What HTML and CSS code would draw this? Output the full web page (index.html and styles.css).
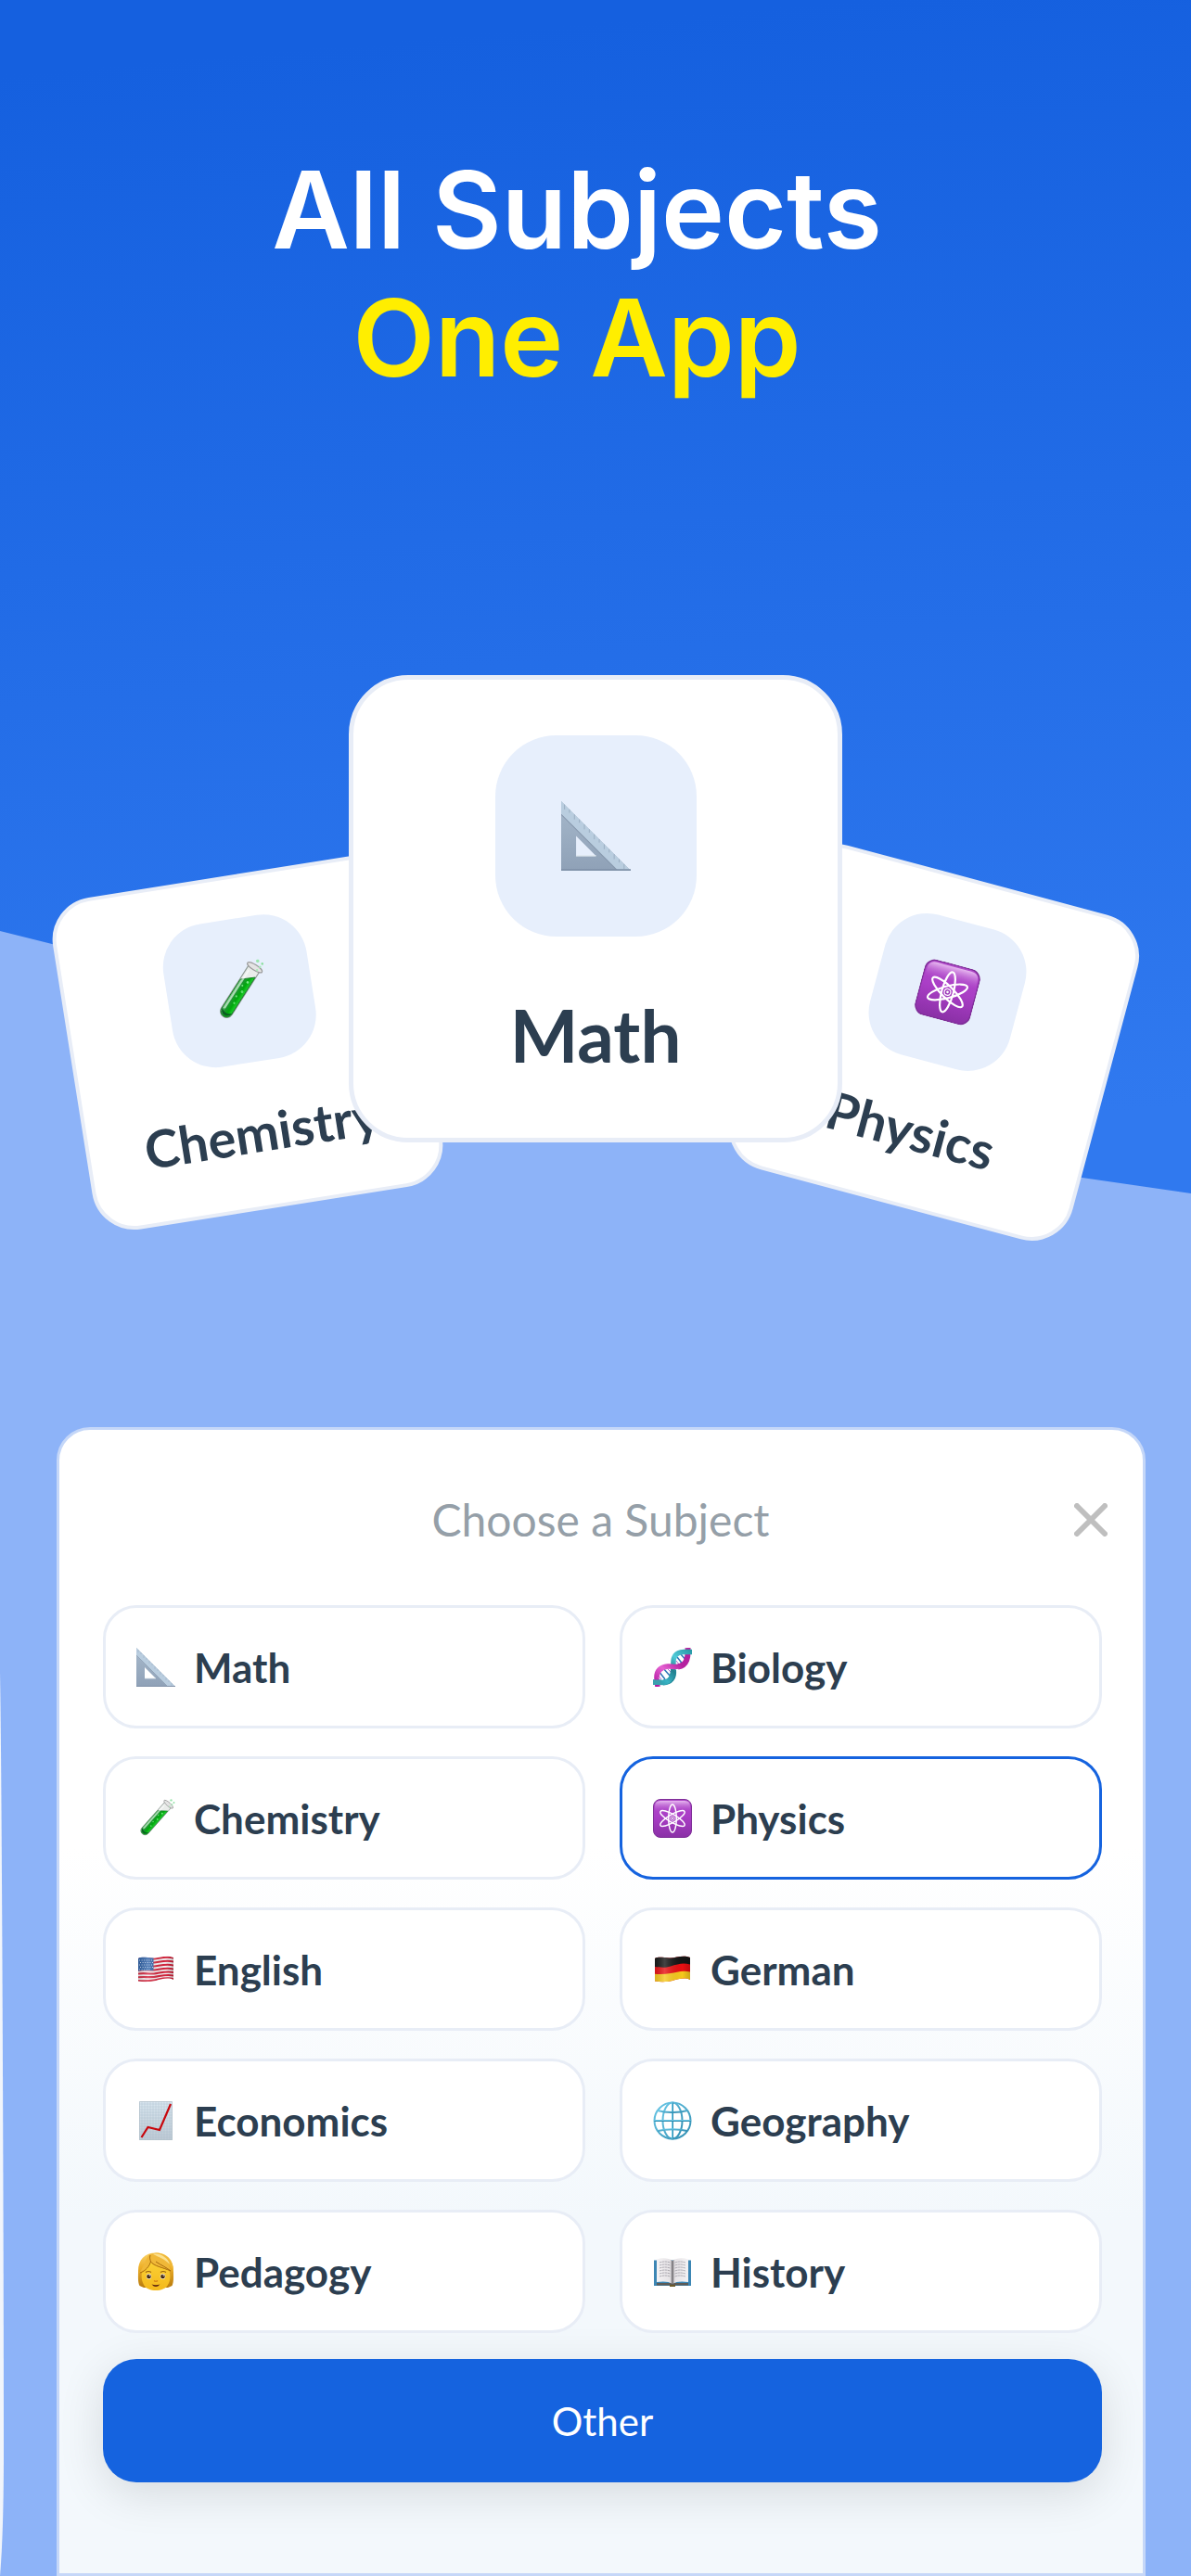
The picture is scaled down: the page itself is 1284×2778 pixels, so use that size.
FILE: index.html
```html
<!DOCTYPE html>
<html lang="en">
<head>
    <meta charset="UTF-8">
    <meta name="viewport" content="width=device-width, initial-scale=1.0">
    <title>All Subjects, One App</title>
    <link rel="stylesheet" href="styles.css">
</head>
<body>
    <!-- Icon sprite -->
    <svg class="sprite" width="0" height="0" aria-hidden="true">
        <defs>
            <linearGradient id="steel" x1="0" y1="0" x2="0" y2="1">
                <stop offset="0" stop-color="#a6b8cb"/>
                <stop offset="1" stop-color="#8fa1b7"/>
            </linearGradient>
            <linearGradient id="liquid" x1="0" y1="0" x2="1" y2="0">
                <stop offset="0" stop-color="#8fd79b"/>
                <stop offset="0.3" stop-color="#1e9632"/>
                <stop offset="0.65" stop-color="#00a80c"/>
                <stop offset="1" stop-color="#1fd02c"/>
            </linearGradient>
            <linearGradient id="purple" x1="0" y1="0" x2="0" y2="1">
                <stop offset="0" stop-color="#b04bc9"/>
                <stop offset="0.45" stop-color="#aa3ec6"/>
                <stop offset="1" stop-color="#8a30a6"/>
            </linearGradient>
            <linearGradient id="gloss" x1="0" y1="0" x2="0" y2="1">
                <stop offset="0" stop-color="#e7b8f0"/>
                <stop offset="1" stop-color="#b34fcd" stop-opacity="0"/>
            </linearGradient>
            <linearGradient id="teal" x1="1" y1="0" x2="0" y2="1">
                <stop offset="0" stop-color="#2a9aa8"/>
                <stop offset="0.3" stop-color="#4fcbd8"/>
                <stop offset="0.55" stop-color="#23808f"/>
                <stop offset="0.8" stop-color="#38b3c4"/>
                <stop offset="1" stop-color="#2a93a0"/>
            </linearGradient>
            <linearGradient id="magenta" x1="1" y1="0" x2="0" y2="1">
                <stop offset="0" stop-color="#b5219f"/>
                <stop offset="0.45" stop-color="#e561d2"/>
                <stop offset="1" stop-color="#b0129c"/>
            </linearGradient>
            <linearGradient id="paper" x1="0" y1="0" x2="0" y2="1">
                <stop offset="0" stop-color="#dbe8f1"/>
                <stop offset="1" stop-color="#bfcad4"/>
            </linearGradient>
            <linearGradient id="globe-line" x1="0" y1="0" x2="1" y2="1">
                <stop offset="0" stop-color="#6cc9e8"/>
                <stop offset="1" stop-color="#2e8cb0"/>
            </linearGradient>
            <linearGradient id="hair" x1="0" y1="0" x2="0" y2="1">
                <stop offset="0" stop-color="#f9d36b"/>
                <stop offset="0.4" stop-color="#eeb02a"/>
                <stop offset="1" stop-color="#b87a0c"/>
            </linearGradient>
            <linearGradient id="skin" x1="0" y1="0" x2="0" y2="1">
                <stop offset="0" stop-color="#fbd035"/>
                <stop offset="1" stop-color="#f4b91c"/>
            </linearGradient>
            <linearGradient id="page-shade" x1="0" y1="0" x2="1" y2="0">
                <stop offset="0" stop-color="#f4f2f4"/>
                <stop offset="0.42" stop-color="#e6e3e6"/>
                <stop offset="0.5" stop-color="#8d8b8f"/>
                <stop offset="0.58" stop-color="#e6e3e6"/>
                <stop offset="1" stop-color="#f4f2f4"/>
            </linearGradient>
            <linearGradient id="fold" x1="0" y1="0" x2="1" y2="0">
                <stop offset="0" stop-color="#000" stop-opacity="0.12"/>
                <stop offset="0.3" stop-color="#fff" stop-opacity="0.2"/>
                <stop offset="0.75" stop-color="#000" stop-opacity="0"/>
                <stop offset="1" stop-color="#000" stop-opacity="0.22"/>
            </linearGradient>
            <clipPath id="flag-shape">
                <path d="M2 9C7 6.500 13 9 19 8.500S33 5 40 8V32C34 29 27 31.500 21 33S8 34.500 2 33.500Z"/>
            </clipPath>
        </defs>

        <symbol id="icon-math" viewBox="0 0 42 42">
            <path d="M0 0L42 42H0ZM9 21V33H21Z" fill="url(#steel)" fill-rule="evenodd"/>
            <path d="M0 0L42 42H34L0 8Z" fill="#b9cddf"/>
            <path d="M0 8L34 42" stroke="#8798ad" stroke-width="0.6"/>
            <path d="M2 2V5M5 5V7M8 8V11M11 11V13M14 14V17M17 17V19M20 20V23M23 23V25M26 26V29M29 29V31M32 32V35M35 35V37M38 38V41" stroke="#8fa3b9" stroke-width="0.4"/>
            <path d="M0 41.500H42" stroke="#7f91a8"/>
            <path d="M9 33H21" stroke="#dfe7ee" stroke-width="0.8"/>
        </symbol>

        <symbol id="icon-chemistry" viewBox="0 0 42 42">
            <g transform="translate(34 6.500) rotate(41.600)">
                <path d="M-4.600 0V37A4.600 4.600 0 0 0 4.600 37V0Z" fill="#e9ecea" stroke="#8f9a94" stroke-width="0.8"/>
                <path d="M-4.200 12L4.200 5V37A4.200 4.200 0 0 1 -4.200 37Z" fill="url(#liquid)" stroke="#157a25" stroke-width="0.6"/>
                <path d="M-2.600 3V36" stroke="#fff" stroke-opacity="0.55" stroke-width="1.400"/>
                <path d="M-4.200 36A4.200 4.200 0 0 0 4.200 36C2 39 -2 39 -4.200 36Z" fill="#0b5e22"/>
                <circle cx="1.500" cy="11" r="0.900" fill="#7de888"/>
                <circle cx="-0.500" cy="15" r="0.700" fill="#6fe07b"/>
                <circle cx="1.800" cy="19" r="1" fill="#5bdc68"/>
                <circle cx="0" cy="24" r="0.700" fill="#6fe07b"/>
                <circle cx="1.400" cy="29" r="0.800" fill="#5bdc68"/>
                <ellipse cx="0" cy="-1" rx="6.300" ry="2" fill="#e4e4e4" stroke="#9b9b9b" stroke-width="0.800"/>
            </g>
            <circle cx="37.500" cy="1.400" r="1.200" fill="#9be7ae"/>
            <circle cx="40.500" cy="4" r="0.900" fill="#8ee0a3"/>
            <circle cx="38.500" cy="6" r="0.900" fill="#a8ebb8"/>
            <circle cx="36" cy="8" r="0.800" fill="#a8ebb8"/>
        </symbol>

        <symbol id="icon-physics" viewBox="0 0 42 42">
            <rect x="0.500" y="0.500" width="41" height="41" rx="7.500" fill="url(#purple)" stroke="#7f2f98"/>
            <path d="M8 2H34Q40 2 40 8V13Q21 15 2 13V8Q2 2 8 2Z" fill="url(#gloss)"/>
            <g fill="none" stroke="#fff" stroke-width="1.500">
                <ellipse cx="21" cy="21" rx="4.300" ry="15"/>
                <ellipse cx="21" cy="21" rx="4.300" ry="15" transform="rotate(60 21 21)"/>
                <ellipse cx="21" cy="21" rx="4.300" ry="15" transform="rotate(120 21 21)"/>
            </g>
            <circle cx="21" cy="21" r="2.300" fill="#9a37b6" stroke="#fff" stroke-width="0.800"/>
            <circle cx="21" cy="21" r="0.900" fill="#fff"/>
        </symbol>

        <symbol id="icon-biology" viewBox="0 0 42 42">
            <path d="M26 10L33 19M30 7L37 15M6 25L13 34M11 22L18 30" stroke="#2c74b8" stroke-width="1.500"/>
            <path d="M25 14L29 19M35 8L38 12M5 29L9 34M15 22L19 26" stroke="#b06ad0" stroke-width="1"/>
            <path d="M37.500 0C38 10 37 19 27 20.500" fill="none" stroke="#b5219f" stroke-width="6"/>
            <path d="M22 24C23 32 19 37 11 37.500" fill="none" stroke="#1f8797" stroke-width="6"/>
            <path d="M42 4.500H33C24 5 21.500 10 22 18C22 29 20 37 11 37.500L0 37" fill="none" stroke="url(#teal)" stroke-width="5.500"/>
            <path d="M31 19C24 22 20 19.500 16 20C8 21 3.500 25 4 33L5 42" fill="none" stroke="url(#magenta)" stroke-width="5.500"/>
            <path d="M0 34.500H9V40H0Z" fill="#3a9fae"/>
        </symbol>

        <symbol id="icon-english" viewBox="0 0 42 42">
            <g clip-path="url(#flag-shape)">
                <path d="M0 0H42V42H0Z" fill="#f3f0f2"/>
                <g fill="none" stroke="#d3243c" stroke-width="2.100">
                    <path d="M0 10.500C7 7 13 10 19 9.500S33 6 42 9"/>
                    <path d="M0 14.500C7 11 13 14 19 13.500S33 10 42 13"/>
                    <path d="M0 18.500C7 15 13 18 19 17.500S33 14 42 17"/>
                    <path d="M0 22.500C7 20 13 22 19 21.500S33 18 42 21"/>
                    <path d="M0 26C7 24 13 26 19 25.500S33 21.500 42 24.500"/>
                    <path d="M0 29.500C7 28.500 13 29.500 19 29S33 25 42 28"/>
                    <path d="M0 33C7 33.500 13 33.500 19 32.500S33 28.500 42 31.500"/>
                </g>
                <path d="M0 6H18.500V22C12 22.500 7 21 0 23Z" fill="#2f62a8"/>
                <g stroke="#c3d6ee" stroke-width="1" stroke-dasharray="1 1.600">
                    <path d="M3 11H18M4 13.500H18M3 16H18M4 18.500H18M3 21H16"/>
                </g>
                <path d="M0 0H42V42H0Z" fill="url(#fold)"/>
            </g>
        </symbol>

        <symbol id="icon-german" viewBox="0 0 42 42">
            <g clip-path="url(#flag-shape)">
                <path d="M0 0H42V42H0Z" fill="#e80f12"/>
                <path d="M0 0H42V16C33 13 27 15 19 17.500S7 18 0 18Z" fill="#151515"/>
                <path d="M0 25.500C7 26.500 13 26 19 25S33 21 42 24V42H0Z" fill="#f6c81c"/>
                <path d="M0 0H42V42H0Z" fill="url(#fold)"/>
            </g>
        </symbol>

        <symbol id="icon-economics" viewBox="0 0 42 42">
            <path d="M3 0H39V42H3Z" fill="url(#paper)"/>
            <path d="M6 0V42M9 0V42M12 0V42M15 0V42M18 0V42M21 0V42M24 0V42M27 0V42M30 0V42M33 0V42M36 0V42M3 3H39M3 6H39M3 9H39M3 12H39M3 15H39M3 18H39M3 21H39M3 24H39M3 27H39M3 30H39M3 33H39M3 36H39M3 39H39" stroke="#a9bccb" stroke-width="0.4"/>
            <path d="M3.500 0.500H38.500V41.500H3.500Z" fill="none" stroke="#b4c1cc" stroke-width="0.8"/>
            <path d="M5.500 39L12.500 28L25 31L37 3" fill="none" stroke="#c8070d" stroke-width="2.200"/>
        </symbol>

        <symbol id="icon-geography" viewBox="0 0 42 42">
            <g fill="none" stroke="url(#globe-line)" stroke-width="2">
                <circle cx="21" cy="21" r="19.500" fill="#fff"/>
                <ellipse cx="21" cy="21" rx="10.500" ry="19.500"/>
                <path d="M21 1.400L21.010 40.600"/>
                <path d="M1.400 21L40.600 21.010"/>
                <path d="M5 10C14 12.500 28 12.500 37 10"/>
                <path d="M5 32C14 29.500 28 29.500 37 32"/>
            </g>
        </symbol>

        <symbol id="icon-pedagogy" viewBox="0 0 42 42">
            <path d="M21 0.500C33 0.500 40 8 40 20C40 27 40.500 32 38.500 36L34 38H8L3.500 36C1.500 32 2 27 2 20C2 8 9 0.500 21 0.500Z" fill="url(#hair)"/>
            <path d="M6 22C8 17 12 13 15 10C21 15 29 17 35 19C37 24 37 30 34 35C30 43 12 43 8 35C6 31 5 27 6 22Z" fill="url(#skin)"/>
            <path d="M14 2C9 8 9 15 3 22C10 20 14 15 15.500 10C19 15 28 16 37 20C36 15 33 11 29 8C35 11 39 16 40 22C41 10 33 0.500 21 0.500Z" fill="#f0b838"/>
            <path d="M18 2C24 0 34 5 36 13C31 7 24 5 18 2Z" fill="#fbe08e"/>
            <path d="M15.500 10C19 15 28 16 37 20M15 3C14 6 15 8 15.500 10C14 15 10 20 4 22M21 10C27 14 32 16 37 20" fill="none" stroke="#a86a0c" stroke-width="1"/>
            <ellipse cx="13.500" cy="26" rx="2.800" ry="3" fill="#fff3d0"/>
            <ellipse cx="28.500" cy="26" rx="2.800" ry="3" fill="#fff3d0"/>
            <circle cx="13.500" cy="26" r="2.300" fill="#3f2410"/>
            <circle cx="28.500" cy="26" r="2.300" fill="#3f2410"/>
            <circle cx="14.200" cy="25" r="0.700" fill="#fff"/>
            <circle cx="29.200" cy="25" r="0.700" fill="#fff"/>
            <path d="M10 21.500Q13 19.500 16 21.500M26 21.500Q29 19.500 32 21.500" fill="none" stroke="#9b6410" stroke-width="1.100"/>
            <path d="M19 30.500Q21 32 23 30.500" fill="none" stroke="#d07b12" stroke-width="1.200"/>
            <path d="M16.500 34.500Q21 36 25.500 34.500Q21 39.500 16.500 34.500Z" fill="#5c2410"/>
        </symbol>

        <symbol id="icon-history" viewBox="0 0 42 42">
            <path d="M1 8.500H41V36H24Q21 38 18 36H1Z" fill="#3c86b4"/>
            <path d="M4 33H38V35.500H23.500Q21 37 18.500 35.500H4Z" fill="#5d5a55"/>
            <path d="M4 7.500C10 5.500 17 6 21 9C25 6 32 5.500 38 7.500V32C32 31 25 31 21 34C17 31 10 31 4 32Z" fill="url(#page-shade)"/>
            <path d="M7 11Q13 9 18.500 11M7 14Q13 12 18.500 14M7 17Q13 15 18.500 17M7 20Q13 18 18.500 20M7 23Q13 21 18.500 23M7 26Q13 24 18.500 26M23.500 11Q29 9 35 11M23.500 14Q29 12 35 14M23.500 17Q29 15 35 17M23.500 20Q29 18 35 20M23.500 23Q29 21 35 23M23.500 26Q29 24 35 26" fill="none" stroke="#99979f" stroke-width="0.800" stroke-dasharray="2.500 0.500"/>
            <path d="M21 9V34" stroke="#66646a" stroke-width="0.900"/>
            <path d="M18 35H24V37H18Z" fill="#6c5a2a"/>
        </symbol>
    </svg>

    <main class="page">
        <svg class="slope" viewBox="0 0 1284 1774" preserveAspectRatio="none" aria-hidden="true">
            <path d="M0 0L925 231L1284 283V1774H0Z" fill="#8db3f8"/>
            <path d="M0 800C2 900 4 1400 4 1640C4 1710 2 1750 0 1774Z" fill="#f1f5fb"/>
        </svg>

        <header class="hero">
            <h1 class="headline">All Subjects<br><span class="headline-accent">One App</span></h1>
        </header>

        <section class="cards">
            <article class="card card-side card-left">
                <div class="card-icon"><svg><use href="#icon-chemistry"/></svg></div>
                <h2 class="card-title">Chemistry</h2>
            </article>
            <article class="card card-main">
                <div class="card-icon"><svg><use href="#icon-math"/></svg></div>
                <h2 class="card-title">Math</h2>
            </article>
            <article class="card card-side card-right">
                <div class="card-icon"><svg><use href="#icon-physics"/></svg></div>
                <h2 class="card-title">Physics</h2>
            </article>
        </section>

        <section class="picker">
            <div class="picker-header">
                <h2 class="picker-title">Choose a Subject</h2>
                <button type="button" class="close" aria-label="Close">
                    <svg viewBox="0 0 36 36"><path d="M3 3L33 33M33 3L3 33"/></svg>
                </button>
            </div>
            <div class="subjects">
                <button type="button" class="subject"><svg><use href="#icon-math"/></svg>Math</button>
                <button type="button" class="subject"><svg><use href="#icon-biology"/></svg>Biology</button>
                <button type="button" class="subject"><svg><use href="#icon-chemistry"/></svg>Chemistry</button>
                <button type="button" class="subject selected"><svg><use href="#icon-physics"/></svg>Physics</button>
                <button type="button" class="subject"><svg><use href="#icon-english"/></svg>English</button>
                <button type="button" class="subject"><svg><use href="#icon-german"/></svg>German</button>
                <button type="button" class="subject"><svg><use href="#icon-economics"/></svg>Economics</button>
                <button type="button" class="subject"><svg><use href="#icon-geography"/></svg>Geography</button>
                <button type="button" class="subject"><svg><use href="#icon-pedagogy"/></svg>Pedagogy</button>
                <button type="button" class="subject"><svg><use href="#icon-history"/></svg>History</button>
            </div>
            <button type="button" class="other">Other</button>
        </section>
    </main>
</body>
</html>
```

FILE: styles.css
```css
* {
    box-sizing: border-box;
}
body {
    margin: 0;
    font-family: Lato, "Open Sans", sans-serif;
    color: #2c3e50;
    background-color: #8db3f8;
}
h1, h2 {
    margin: 0;
}
button {
    font-family: inherit;
    cursor: pointer;
}
.sprite {
    position: absolute;
}
.page {
    position: relative;
    z-index: 0;
    overflow: hidden;
    background: linear-gradient(175deg, #1560df 80px, #3079ef 1300px);
}
/* Light slanted area behind the lower part of the page */
.slope {
    position: absolute;
    z-index: -1;
    top: 1004px;
    left: 0;
    width: 100%;
    height: calc(100% - 1004px);
}

/* Headline */
.hero {
    padding: 158px 40px 0 0;
    text-align: center;
}
.headline {
    font-family: Inter, sans-serif;
    font-size: 115px;
    line-height: 138px;
    font-weight: 600;
    color: #fff;
}
.headline-accent {
    color: #ffee00;
}

/* Fanned subject cards */
.cards {
    display: flex;
    justify-content: center;
    align-items: flex-start;
    margin-top: 294px;
    padding-right: 10px;
}
.card {
    flex: none;
    display: flex;
    flex-direction: column;
    align-items: center;
    background: #fff;
    border: 5px solid #e8edf7;
}
.card-icon {
    display: flex;
    align-items: center;
    justify-content: center;
    background: #e7effc;
}
.card-title {
    font-weight: 700;
}
.card-main {
    position: relative;
    z-index: 1;
    width: 532px;
    padding: 60px 0 66px;
    border-radius: 64px;
}
.card-main .card-icon {
    width: 217px;
    height: 217px;
    border-radius: 66px;
}
.card-main svg {
    width: 75px;
    height: 75px;
}
.card-main .card-title {
    margin-top: 61px;
    font-size: 78px;
    line-height: 90px;
}
.card-side {
    width: 382px;
    margin-top: 215px;
    padding: 43px 0 47px;
    border-width: 4px;
    border-radius: 46px;
}
.card-side .card-icon {
    width: 156px;
    height: 156px;
    border-radius: 47px;
}
.card-side svg {
    width: 62px;
    height: 62px;
}
.card-side .card-title {
    margin-top: 44px;
    font-size: 56px;
    line-height: 64px;
}
.card-left {
    margin-right: -82px;
    transform: rotate(-9deg);
}
.card-right {
    margin-left: -92px;
    transform: rotate(15deg);
}

/* Subject picker */
.picker {
    margin: 234px 49px 0 61px;
    padding: 67px 44px 98px 47px;
    border: 3px solid #c5d7f8;
    border-radius: 36px 36px 0 0;
    background: linear-gradient(#fff 450px, #f3f8fc 850px);
}
.picker-header {
    display: flex;
    align-items: center;
    margin: 0 -6px 62px 26px;
}
.picker-title {
    flex: 1;
    font-size: 48px;
    line-height: 60px;
    font-weight: 400;
    color: #959fa8;
    text-align: center;
}
.close {
    width: 36px;
    height: 36px;
    padding: 0;
    border: none;
    background: none;
}
.close svg {
    display: block;
    stroke: #bfbfbf;
    stroke-width: 6;
    stroke-linecap: round;
}
.subjects {
    display: grid;
    grid-template-columns: 1fr 1fr;
    gap: 30px 37px;
}
.subject {
    display: flex;
    align-items: center;
    gap: 20px;
    height: 133px;
    padding: 0 33px;
    border: 3px solid #e8edf6;
    border-radius: 36px;
    background: #fff;
    color: #2c3e50;
    font-size: 44px;
    font-weight: 700;
}
.subject svg {
    width: 42px;
    height: 42px;
}
.subject.selected {
    border-color: #1563df;
}
.other {
    display: block;
    width: 100%;
    height: 133px;
    margin-top: 28px;
    border: none;
    border-radius: 36px;
    background: #1563df;
    color: #fff;
    font-size: 42px;
    box-shadow: 0 12px 50px rgba(0, 0, 0, 0.12);
}
```
